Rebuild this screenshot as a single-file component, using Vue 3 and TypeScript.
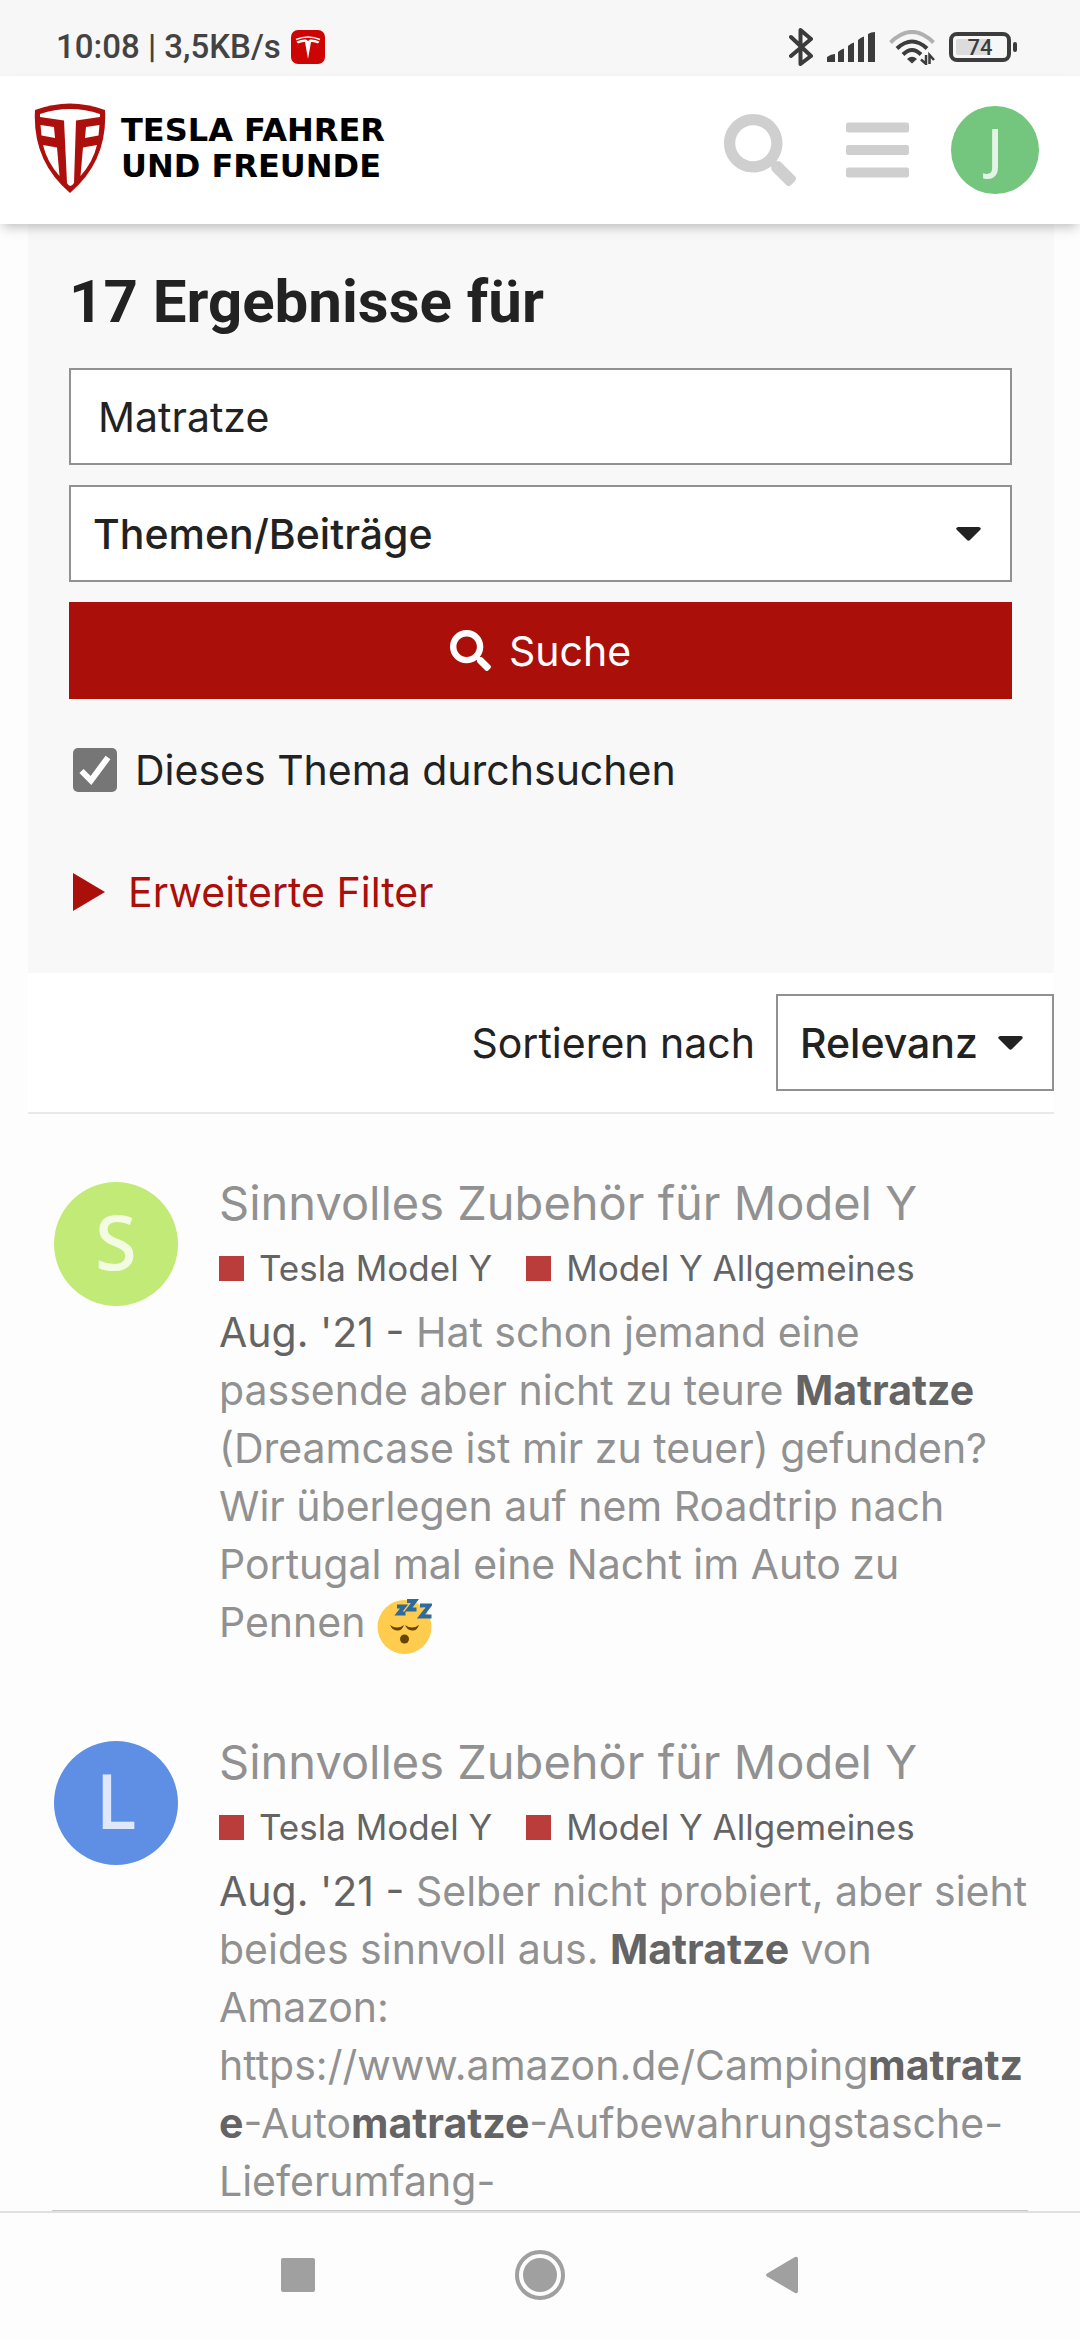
<script setup lang="ts">
import { ref } from 'vue'

interface Part {
  text: string
  kind?: 'hit' | 'sleeping'
}

interface Result {
  id: number
  initial: string
  color: string
  title: string
  categories: string[]
  date: string
  parts: Part[]
}

const term = ref('Matratze')
const scope = ref('Themen/Beiträge')
const order = ref('Relevanz')
const inTopic = ref(true)

const results: Result[] = [
  {
    id: 1,
    initial: 'S',
    color: '#c1eb76',
    title: 'Sinnvolles Zubehör für Model Y',
    categories: ['Tesla Model Y', 'Model Y Allgemeines'],
    date: "Aug. '21",
    parts: [
      { text: 'Hat schon jemand eine passende aber nicht zu teure ' },
      { text: 'Matratze', kind: 'hit' },
      { text: ' (Dreamcase ist mir zu teuer) gefunden? Wir überlegen auf nem Roadtrip nach Portugal mal eine Nacht im Auto zu Pennen ' },
      { text: '', kind: 'sleeping' },
    ],
  },
  {
    id: 2,
    initial: 'L',
    color: '#5f8ee5',
    title: 'Sinnvolles Zubehör für Model Y',
    categories: ['Tesla Model Y', 'Model Y Allgemeines'],
    date: "Aug. '21",
    parts: [
      { text: 'Selber nicht probiert, aber sieht beides sinnvoll aus. ' },
      { text: 'Matratze', kind: 'hit' },
      { text: ' von Amazon: https://www.amazon.de/Camping' },
      { text: 'matratze', kind: 'hit' },
      { text: '-Auto' },
      { text: 'matratze', kind: 'hit' },
      { text: '-Aufbewahrungstasche-Lieferumfang-' },
    ],
  },
]

const searchPath =
  'M505 442.7L405.3 343c-4.5-4.5-10.6-7-17-7H372c27.6-35.3 44-79.7 44-128C416 93.1 322.9 0 208 0S0 93.1 0 208s93.1 208 208 208c48.3 0 92.7-16.4 128-44v16.3c0 6.4 2.5 12.5 7 17l99.7 99.7c9.4 9.4 24.6 9.4 33.9 0l28.3-28.3c9.4-9.4 9.4-24.6.1-34zM208 336c-70.7 0-128-57.2-128-128 0-70.7 57.2-128 128-128 70.7 0 128 57.2 128 128 0 70.7-57.2 128-128 128z'
</script>

<template>
  <div class="screen">
    <div class="status">
      <span class="clock">10:08 | 3,5KB/s</span>
      <svg class="app-badge" width="34" height="34" viewBox="0 0 34 34" aria-hidden="true">
        <rect width="34" height="34" rx="7" fill="#cc0404" />
        <path d="M5 9.500Q17 4.500 29 9.500" fill="none" stroke="#fff" stroke-width="1.600" />
        <path d="M5.500 11.500Q11 9 15 9.500L17 11L19 9.500Q23 9 28.500 11.500L27 13.500Q23 11.500 20 12L17 29L14 12Q11 11.500 7 13.500Z" fill="#fff" />
      </svg>
      <div class="indicators">
        <svg width="24" height="38" viewBox="0 0 24 38" aria-hidden="true">
          <path d="M2 9L22 28L11.500 36V2L22 11L2 28" fill="none" stroke="#3c3c3c" stroke-width="4" stroke-linejoin="round" stroke-linecap="round" />
        </svg>
        <svg class="signal" width="48" height="30" viewBox="0 0 48 30" fill="#3c3c3c" aria-hidden="true">
          <path d="M0 25Q4 22 8 22V30H0ZM11 20Q14 17 17 16.500V30H11ZM21 14Q24 11 27 10.500V30H21ZM31 8Q34 5 37 4.500V30H31ZM41 2Q44 0 48 0V30H41Z" />
        </svg>
        <svg class="wifi" width="46" height="35" viewBox="0 0 46 35" fill="none" stroke-width="4" aria-hidden="true">
          <path d="M1.500 12.500Q23-8.500 44.500 12.500" stroke="#b0b0b0" />
          <path d="M8 18.500Q23 4.500 38 18.500" stroke="#3c3c3c" />
          <path d="M14 24.500Q23 15.500 32 24.500" stroke="#3c3c3c" />
          <path d="M18 29Q23 24.500 28 29L23 33.500Z" fill="#3c3c3c" />
          <path d="M37 25V34L32 29.500M40.500 34V25L45 30" stroke="#3c3c3c" stroke-width="2.500" />
        </svg>
        <svg width="68" height="30" viewBox="0 0 68 30" aria-hidden="true">
          <rect x="2" y="2" width="58" height="26" rx="6" fill="none" stroke="#3c3c3c" stroke-width="4" />
          <rect x="7" y="7" width="34" height="16" rx="2" fill="#dcdcdc" />
          <rect x="64" y="10" width="4" height="10" rx="2" fill="#3c3c3c" />
          <text x="31" y="23" text-anchor="middle" class="charge">74</text>
        </svg>
      </div>
    </div>

    <header class="header">
      <a class="brand" href="#">
        <svg width="72" height="90" viewBox="0 0 72 90" aria-hidden="true">
          <path d="M1 7Q36-6 71 7Q74 58 36 90Q-2 58 1 7Z" fill="#ad100c" />
          <g fill="#fff">
            <path d="M6 11Q36 1 66 11V14L42 17.500L40 80Q36 86 33 80L30 17.500L6 14Z" />
            <path d="M6.500 22L20 24L21 35L7.500 32.500Z" />
            <path d="M65.500 22L52 24L51 35L64.500 32.500Z" />
            <path d="M9 42L23 44.500L25.500 73Q13 59 9 42Z" />
            <path d="M63 42L49 44.500L46.500 73Q59 59 63 42Z" />
          </g>
        </svg>
        <span class="brand-name">TESLA FAHRER<br />UND FREUNDE</span>
      </a>
      <nav class="tools">
        <button type="button" class="icon-button" aria-label="Suche">
          <svg width="72" height="72" viewBox="0 0 512 512" fill="#cfcfcf"><path :d="searchPath" /></svg>
        </button>
        <button type="button" class="icon-button" aria-label="Menü">
          <svg width="63" height="72" viewBox="0 0 448 512" fill="#cfcfcf">
            <rect y="60" width="448" height="72" rx="16" />
            <rect y="220" width="448" height="72" rx="16" />
            <rect y="380" width="448" height="72" rx="16" />
          </svg>
        </button>
        <button type="button" class="avatar avatar-small">J</button>
      </nav>
    </header>

    <main class="page">
      <form class="panel" @submit.prevent>
        <h1>17 Ergebnisse für</h1>
        <div class="fields">
          <input v-model="term" class="field" type="text" aria-label="Suchbegriff" />
          <div class="picker">
            <select v-model="scope" class="field" aria-label="Suchbereich">
              <option>Themen/Beiträge</option>
              <option>Kategorien/Schlagwörter</option>
              <option>Benutzer</option>
            </select>
            <svg class="caret" width="25" height="14" viewBox="0 0 25 14" aria-hidden="true">
              <path d="M2 0H23Q26 1 24 3L14 13Q12.500 14.500 11 13L1 3Q-1 1 2 0Z" fill="#222" />
            </svg>
          </div>
          <button type="submit" class="submit">
            <svg width="41" height="41" viewBox="0 0 512 512" fill="#fff" aria-hidden="true"><path :d="searchPath" /></svg>
            Suche
          </button>
        </div>
        <label class="check">
          <span class="box">
            <input v-model="inTopic" type="checkbox" />
            <svg v-if="inTopic" width="44" height="44" viewBox="0 0 44 44" aria-hidden="true">
              <path d="M8.500 23L18 32.500L35 9.500" fill="none" stroke="#fff" stroke-width="6" />
            </svg>
          </span>
          Dieses Thema durchsuchen
        </label>
        <button type="button" class="filters">
          <svg width="32" height="38" viewBox="0 0 32 38" aria-hidden="true"><path d="M0 0L32 19L0 38Z" fill="#aa0f0a" /></svg>
          Erweiterte Filter
        </button>
      </form>

      <div class="sorting">
        <label for="order">Sortieren nach</label>
        <div class="picker">
          <select id="order" v-model="order" class="field">
            <option>Relevanz</option>
            <option>Likes</option>
          </select>
          <svg class="caret" width="25" height="14" viewBox="0 0 25 14" aria-hidden="true">
            <path d="M2 0H23Q26 1 24 3L14 13Q12.500 14.500 11 13L1 3Q-1 1 2 0Z" fill="#222" />
          </svg>
        </div>
      </div>

      <div class="results">
        <article v-for="item in results" :key="item.id" class="result">
          <span class="avatar" :style="{ background: item.color }">{{ item.initial }}</span>
          <div class="body">
            <h2><a href="#">{{ item.title }}</a></h2>
            <div class="categories">
              <a v-for="name in item.categories" :key="name" href="#">{{ name }}</a>
            </div>
            <p>
              <span class="date">{{ item.date }} - </span>
              <template v-for="(part, i) in item.parts" :key="i">
                <b v-if="part.kind === 'hit'">{{ part.text }}</b>
                <svg v-else-if="part.kind === 'sleeping'" class="emoji" width="55" height="55" viewBox="0 0 55 55" role="img" aria-label="schlafend">
                  <circle cx="27.500" cy="28" r="27" fill="#ffcc4d" />
                  <path d="M13 26Q20 31 27 26Q25 32 20 31.500Q15 31 13 26ZM28 26Q35 31 42 26Q40 32 35 31.500Q30 31 28 26Z" fill="#664500" />
                  <circle cx="27.500" cy="40" r="4.500" fill="#664500" />
                  <path d="M20 7.500H27L21.500 14.500H28.500M30 2H38L31.500 10.500H39.500M43 6.500H52.500L44 17.500H54.500" fill="none" stroke="#2f6a9b" stroke-width="4" />
                </svg>
                <template v-else>{{ part.text }}</template>
              </template>
            </p>
          </div>
        </article>
      </div>
    </main>

    <nav class="system">
      <button type="button" aria-label="Übersicht">
        <svg width="50" height="50" viewBox="0 0 50 50"><rect x="8" y="8" width="34" height="34" rx="2" fill="#a0a0a0" /></svg>
      </button>
      <button type="button" aria-label="Startseite">
        <svg width="50" height="50" viewBox="0 0 50 50" fill="#a0a0a0">
          <circle cx="25" cy="25" r="23" fill="none" stroke="#a0a0a0" stroke-width="4" />
          <circle cx="25" cy="25" r="17" />
        </svg>
      </button>
      <button type="button" aria-label="Zurück">
        <svg width="50" height="50" viewBox="0 0 50 50"><path d="M10 23.500L38 7Q41 6 41 9V41Q41 44 38 43L10 26.500Q8 25 10 23.500Z" fill="#a0a0a0" /></svg>
      </button>
    </nav>
  </div>
</template>

<style>
body {
  background: #fdfdfd;
}
</style>

<style scoped>
.screen {
  display: flex;
  flex-direction: column;
  height: 100vh;
  font-family: Inter, "Liberation Sans", sans-serif;
  font-size: 41px;
  line-height: 58px;
  color: #222;
}

button,
input,
select {
  box-sizing: border-box;
  margin: 0;
  padding: 0;
  border: 0;
  border-radius: 0;
  background: none;
  font: inherit;
  color: inherit;
}

a {
  color: inherit;
  text-decoration: none;
}

svg {
  display: block;
}

.status {
  display: flex;
  align-items: center;
  flex: none;
  gap: 10px;
  padding: 18px 63px 0 56px;
  background: #f7f7f7;
  font-family: Roboto, "Noto Sans", sans-serif;
  font-size: 33px;
  font-weight: 500;
  color: #434343;
}

.indicators {
  display: flex;
  align-items: center;
  gap: 14px;
  margin-left: auto;
}

.charge {
  font-size: 22px;
  font-weight: 500;
  fill: #3c3c3c;
}

.header {
  position: relative;
  z-index: 1;
  display: flex;
  align-items: center;
  justify-content: space-between;
  flex: none;
  height: 148px;
  padding: 0 41px 0 34px;
  background: #fff;
  box-shadow: 0 6px 11px -3px rgba(0, 0, 0, 0.25);
}

.brand {
  display: flex;
  align-items: center;
  gap: 15px;
  padding-bottom: 4px;
}

.brand-name {
  font-family: "DejaVu Sans", sans-serif;
  font-size: 32px;
  line-height: 36px;
  font-weight: 700;
  color: #000;
}

.tools {
  display: flex;
  align-items: center;
}

.icon-button {
  margin-right: 50px;
}

.icon-button + .avatar {
  margin-left: -8px;
}

.avatar {
  box-sizing: border-box;
  display: flex;
  align-items: center;
  justify-content: center;
  width: 124px;
  height: 124px;
  padding-bottom: 6px;
  border-radius: 50%;
  font-family: "Noto Sans", sans-serif;
  font-size: 76px;
  font-weight: 500;
  color: rgba(255, 255, 255, 0.8);
}

.avatar-small {
  width: 88px;
  height: 88px;
  background: #74c57d;
  font-family: "Noto Sans", sans-serif;
  font-size: 54px;
  color: rgba(255, 255, 255, 0.8);
}

.page {
  flex: 1;
  min-height: 0;
  overflow: hidden;
}

.panel {
  margin: 0 26px 0 28px;
  padding: 42px 42px 52px 41px;
  background: #f8f8f8;
}

h1 {
  margin: 0 0 30px;
  font-family: Roboto, "Noto Sans", sans-serif;
  font-size: 60px;
  line-height: 72px;
  font-weight: 700;
}

.fields {
  display: flex;
  flex-direction: column;
  gap: 20px;
}

.field {
  width: 100%;
  height: 97px;
  padding: 0 27px;
  border: 2px solid #919191;
  background: #fff;
}

.picker {
  display: grid;
  align-items: center;
}

.picker > * {
  grid-area: 1 / 1;
}

select.field {
  appearance: none;
  padding: 0 74px 0 22px;
  font-weight: 500;
}

.caret {
  justify-self: end;
  margin-right: 31px;
  pointer-events: none;
}

.submit {
  display: flex;
  align-items: center;
  justify-content: center;
  gap: 18px;
  height: 97px;
  background: #aa0f0a;
  color: #fff;
}

.check {
  display: flex;
  align-items: center;
  gap: 18px;
  margin: 42px 0 64px 4px;
}

.box {
  display: grid;
}

.box > * {
  grid-area: 1 / 1;
}

.box input {
  width: 44px;
  height: 44px;
  border-radius: 5px;
  background: #767676;
  appearance: none;
}

.box svg {
  pointer-events: none;
}

.filters {
  display: flex;
  align-items: center;
  gap: 23px;
  margin-left: 4px;
  color: #aa0f0a;
}

.sorting {
  display: flex;
  align-items: center;
  justify-content: flex-end;
  gap: 21px;
  margin: 0 26px 0 28px;
  padding: 21px 0;
  border-bottom: 2px solid #e9e9e9;
  background: #fff;
}

.results {
  display: flex;
  flex-direction: column;
  gap: 82px;
  padding: 60px 52px 0;
}

.result {
  display: grid;
  grid-template-columns: 124px 1fr;
  align-items: start;
  gap: 41px;
  padding-left: 2px;
}

.result:last-child {
  border-bottom: 1px solid #c8c8c8;
}

.result .avatar {
  margin-top: 8px;
}

.body {
  min-width: 0;
}

h2 {
  margin: 0;
  font-size: 47px;
  line-height: 58px;
  font-weight: 400;
  color: #919191;
}

.categories {
  display: flex;
  gap: 34px;
  margin: 11px 0 10px;
  font-size: 35px;
  line-height: 50px;
  color: #646464;
}

.categories a {
  display: flex;
  align-items: center;
  gap: 15px;
}

.categories a::before {
  content: "";
  width: 25px;
  height: 25px;
  background: #bb3d3b;
}

p {
  margin: 0;
  color: #919191;
  overflow-wrap: break-word;
}

.date,
b {
  color: #646464;
}

.emoji {
  display: inline-block;
  margin: -4px 0;
  vertical-align: -13px;
}

.system {
  display: flex;
  align-items: center;
  justify-content: center;
  gap: 192px;
  flex: none;
  height: 124px;
  padding-bottom: 3px;
  border-top: 2px solid #e0e0e0;
  background: #fdfdfd;
}
</style>
